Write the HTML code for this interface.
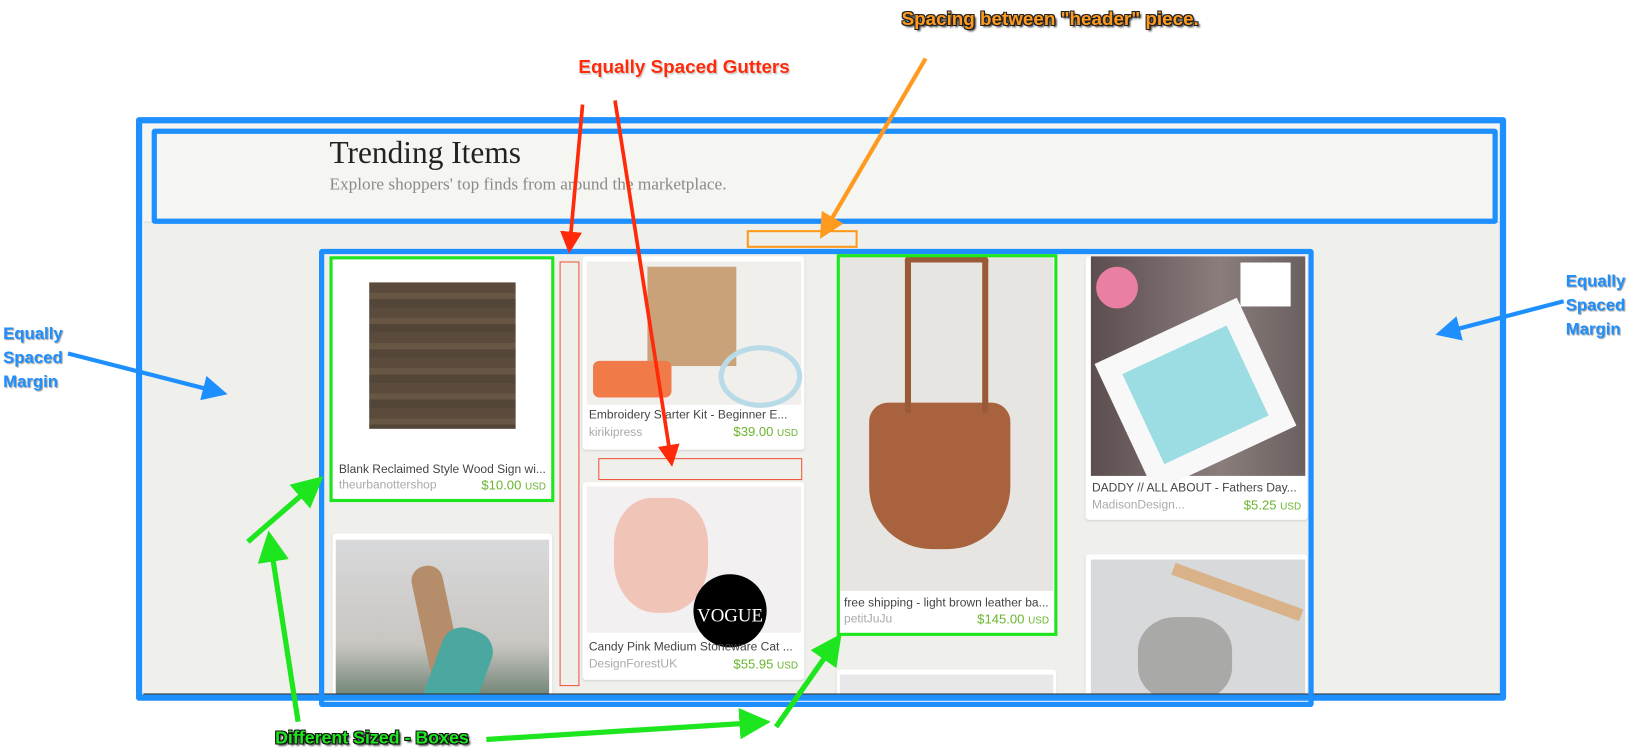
<!DOCTYPE html>
<html><head><meta charset="utf-8">
<style>
html,body{margin:0;padding:0;background:#fff;overflow:hidden;width:1640px;height:755px}
#w{position:absolute;left:0;top:0;width:1568px;height:722px;transform:scale(1.04592);transform-origin:0 0;font-family:"Liberation Sans",sans-serif}
.a{position:absolute}
.card{position:absolute;background:#fff;border-radius:3px;box-shadow:0 1px 2px rgba(0,0,0,.12);overflow:hidden}
.img{position:absolute}
.t{position:absolute;left:6px;font-size:11.5px;color:#444;white-space:nowrap}
.s{position:absolute;left:6px;font-size:11.5px;color:#aaa}
.p{position:absolute;right:6px;font-size:12.5px;color:#6ab42e}
.p small{font-size:9.5px}
.bx{position:absolute;box-sizing:border-box}
.ann{position:absolute;font-weight:bold;white-space:nowrap}
</style></head><body><div id="w">
<div class="a" style="left:137px;top:118px;width:1300px;height:545px;background:#efefeb;overflow:hidden">
  <div class="a" style="left:0;top:0;width:1300px;height:94px;background:#f5f5f2;border-bottom:1px solid #dcdcd8"></div>
  <div class="a" style="left:178px;top:12px;font-family:'Liberation Serif',serif;font-size:30px;color:#222">Trending Items</div>
  <div class="a" style="left:178px;top:48px;font-family:'Liberation Serif',serif;font-size:16.5px;color:#8a8a8a">Explore shoppers' top finds from around the marketplace.</div>

  <div class="card" style="left:181px;top:129px;width:210px;height:231px">
    <div class="img" style="left:35px;top:23px;width:140px;height:140px;background:repeating-linear-gradient(180deg,#5a4b3c 0 10px,#675644 10px 16px,#534538 16px 24px)"></div>
    <div class="t" style="top:196px">Blank Reclaimed Style Wood Sign wi...</div>
    <div class="s" style="top:211px">theurbanottershop</div>
    <div class="p" style="top:210px">$10.00 <small>USD</small></div>
  </div>
  <div class="card" style="left:181px;top:392px;width:210px;height:200px">
    <div class="img" style="left:3px;top:6px;width:204px;height:200px;background:linear-gradient(180deg,#d8d9db 0%,#c9c6c2 50%,#7b8c7f 72%,#4e6155 100%)"></div>
    <div class="img" style="left:85px;top:30px;width:30px;height:120px;background:#b58d6a;border-radius:14px;transform:rotate(-12deg)"></div>
    <div class="img" style="left:95px;top:90px;width:50px;height:90px;background:#4aa8a0;border-radius:20px;transform:rotate(20deg)"></div>
  </div>
  <div class="card" style="left:420px;top:127px;width:212px;height:185px">
    <div class="img" style="left:4px;top:5px;width:205px;height:137px;background:#f1efec"></div>
    <div class="img" style="left:62px;top:10px;width:85px;height:95px;background:#c9a27a"></div>
    <div class="img" style="left:10px;top:100px;width:75px;height:35px;background:#f07a48;border-radius:6px"></div>
    <div class="img" style="left:130px;top:85px;width:70px;height:50px;border:5px solid #b9dbe8;border-radius:50%"></div>
    <div class="t" style="top:146px">Embroidery Starter Kit - Beginner E...</div>
    <div class="s" style="top:163px">kirikipress</div>
    <div class="p" style="top:161px">$39.00 <small>USD</small></div>
  </div>
  <div class="card" style="left:420px;top:343px;width:212px;height:189px">
    <div class="img" style="left:4px;top:4px;width:205px;height:140px;background:#f3f0f2"></div>
    <div class="img" style="left:30px;top:15px;width:90px;height:110px;background:#f1c4b8;border-radius:40% 40% 45% 45%"></div>
    <div class="img" style="left:106px;top:88px;width:70px;height:70px;background:#000;border-radius:50%"></div>
    <div class="img" style="left:108px;top:117px;width:66px;text-align:center;color:#fff;font-family:'Liberation Serif',serif;font-size:18px">VOGUE</div>
    <div class="t" style="top:152px">Candy Pink Medium Stoneware Cat ...</div>
    <div class="s" style="top:168px">DesignForestUK</div>
    <div class="p" style="top:167px">$55.95 <small>USD</small></div>
  </div>
  <div class="card" style="left:664px;top:127px;width:208px;height:361px">
    <div class="img" style="left:2px;top:0;width:204px;height:320px;background:#e6e5e1"></div>
    <div class="img" style="left:30px;top:140px;width:135px;height:140px;background:#a8623e;border-radius:18px 18px 60px 60px"></div>
    <div class="img" style="left:64px;top:0;width:80px;height:150px;border:6px solid #9a5a38;border-bottom:none;border-radius:4px;box-sizing:border-box"></div>
    <div class="t" style="top:326px">free shipping - light brown leather ba...</div>
    <div class="s" style="top:341px">petitJuJu</div>
    <div class="p" style="top:340px">$145.00 <small>USD</small></div>
  </div>
  <div class="card" style="left:663px;top:522px;width:210px;height:40px">
    <div class="img" style="left:3px;top:5px;width:204px;height:40px;background:#e8e8e8"></div>
  </div>
  <div class="card" style="left:901px;top:127px;width:212px;height:252px">
    <div class="img" style="left:5px;top:0;width:205px;height:210px;background:linear-gradient(90deg,#5c4d4f,#8a7d7c 60%,#6b6060)"></div>
    <div class="img" style="left:30px;top:65px;width:150px;height:135px;background:#f8f8f8;transform:rotate(-25deg)"></div>
    <div class="img" style="left:50px;top:85px;width:110px;height:95px;background:#9bdde3;transform:rotate(-25deg)"></div>
    <div class="img" style="left:148px;top:6px;width:48px;height:42px;background:#fff"></div>
    <div class="img" style="left:10px;top:10px;width:40px;height:40px;background:#e97fa3;border-radius:50%"></div>
    <div class="t" style="top:216px">DADDY // ALL ABOUT - Fathers Day...</div>
    <div class="s" style="top:232px">MadisonDesign...</div>
    <div class="p" style="top:231px">$5.25 <small>USD</small></div>
  </div>
  <div class="card" style="left:901px;top:412px;width:212px;height:140px">
    <div class="img" style="left:5px;top:5px;width:205px;height:140px;background:#d8d9da"></div>
    <div class="img" style="left:50px;top:60px;width:90px;height:80px;background:#a9a9a7;border-radius:40%"></div>
    <div class="img" style="left:80px;top:30px;width:130px;height:12px;background:#d9b28a;transform:rotate(20deg)"></div>
  </div>
</div>
<div class="a" style="left:137px;top:663px;width:1300px;height:1px;background:#333"></div>

<div class="bx" style="left:130px;top:112px;width:1310px;height:558px;border:6px solid #1e8fff;border-radius:3px"></div>
<div class="bx" style="left:145px;top:123px;width:1287px;height:91px;border:5px solid #1e8fff;border-radius:3px"></div>
<div class="bx" style="left:714px;top:220px;width:106px;height:17px;border:2px solid #ff9a1f"></div>
<div class="bx" style="left:305px;top:238px;width:951px;height:438px;border:5px solid #1e8fff;border-radius:3px"></div>
<div class="bx" style="left:315px;top:245px;width:215px;height:235px;border:3px solid #1ee61e"></div>
<div class="bx" style="left:800px;top:243px;width:211px;height:365px;border:3px solid #1ee61e"></div>
<div class="bx" style="left:535px;top:250px;width:19px;height:406px;border:1.5px solid #f0553a"></div>
<div class="bx" style="left:572px;top:438px;width:195px;height:21px;border:1.5px solid #f0553a"></div>

<svg class="a" style="left:0;top:0" width="1568" height="722">
<defs>
<marker id="mo" markerWidth="6" markerHeight="6" refX="3" refY="3" orient="auto"><path d="M0,0 L6,3 L0,6 z" fill="#ff9a1f"/></marker>
<marker id="mr" markerWidth="6" markerHeight="6" refX="3" refY="3" orient="auto"><path d="M0,0 L6,3 L0,6 z" fill="#ff2a0a"/></marker>
<marker id="mb" markerWidth="6" markerHeight="6" refX="3" refY="3" orient="auto"><path d="M0,0 L6,3 L0,6 z" fill="#1e8fff"/></marker>
<marker id="mg" markerWidth="6" markerHeight="6" refX="3" refY="3" orient="auto"><path d="M0,0 L6,3 L0,6 z" fill="#1ee61e"/></marker>
</defs>
<line x1="885" y1="56" x2="790" y2="218" stroke="#ff9a1f" stroke-width="4" marker-end="url(#mo)"/>
<line x1="557" y1="100" x2="545" y2="232" stroke="#ff2a0a" stroke-width="3.5" marker-end="url(#mr)"/>
<line x1="588" y1="96" x2="641" y2="436" stroke="#ff2a0a" stroke-width="3.5" marker-end="url(#mr)"/>
<line x1="65" y1="338" x2="206" y2="374" stroke="#1e8fff" stroke-width="4" marker-end="url(#mb)"/>
<line x1="1495" y1="288" x2="1384" y2="317" stroke="#1e8fff" stroke-width="4" marker-end="url(#mb)"/>
<line x1="237" y1="518" x2="298" y2="465" stroke="#1ee61e" stroke-width="5" marker-end="url(#mg)"/>
<line x1="285" y1="690" x2="259" y2="522" stroke="#1ee61e" stroke-width="5" marker-end="url(#mg)"/>
<line x1="465" y1="707" x2="722" y2="691" stroke="#1ee61e" stroke-width="5" marker-end="url(#mg)"/>
<line x1="742" y1="695" x2="796" y2="618" stroke="#1ee61e" stroke-width="5" marker-end="url(#mg)"/>
</svg>

<div class="ann" style="left:862px;top:8px;font-size:18px;color:#ff9a1f;text-shadow:-1px -1px 0 #222,1px -1px 0 #222,-1px 1px 0 #222,1px 1px 0 #222,2px 2px 2px #000">Spacing between "header" piece.</div>
<div class="ann" style="left:553px;top:54px;font-size:18px;color:#ff2a0a;text-shadow:0 0 2px #fff,1px 1px 1px #bbb">Equally Spaced Gutters</div>
<div class="ann" style="left:3px;top:308px;font-size:16px;line-height:23px;color:#1e8fff;text-shadow:1px 1px 1px #999">Equally<br>Spaced<br>Margin</div>
<div class="ann" style="left:1497px;top:258px;font-size:16px;line-height:23px;color:#1e8fff;text-shadow:1px 1px 1px #999">Equally<br>Spaced<br>Margin</div>
<div class="ann" style="left:263px;top:696px;font-size:17px;color:#1ee61e;text-shadow:-1px -1px 0 #111,1px -1px 0 #111,-1px 1px 0 #111,1px 1px 0 #111,2px 2px 2px #000">Different Sized - Boxes</div>
</div></body></html>
